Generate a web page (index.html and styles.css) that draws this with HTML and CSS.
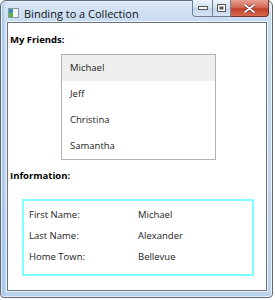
FILE: index.html
```html
<!DOCTYPE html>
<html>
<head>
<meta charset="utf-8">
<link rel="stylesheet" href="styles.css">
</head>
<body>
<div class="window">
  <div class="titlebar">
    <svg class="appicon" width="11" height="10" viewBox="0 0 11 10">
      <rect x="0.5" y="0.5" width="10" height="9" fill="#f4f6f8" stroke="#8c98a4"/>
      <rect x="1" y="1" width="4" height="8" fill="#3a8fb8"/>
      <rect x="1" y="5" width="4" height="4" fill="#5fb04a"/>
    </svg>
    <span class="title">Binding to a Collection</span>
    <div class="buttons">
      <div class="btn min"><svg width="10" height="4" viewBox="0 0 10 4"><rect x="0.5" y="0.5" width="9" height="3" fill="#fff" stroke="#555"/></svg></div>
      <div class="btn max"><svg width="9" height="8" viewBox="0 0 9 8"><rect x="0.5" y="0.5" width="8" height="7" fill="#fff" stroke="#555"/><rect x="2.5" y="2.5" width="4" height="3" fill="#555"/></svg></div>
      <div class="btn close"><svg width="11" height="9" viewBox="0 0 11 9"><path d="M1 1 L10 8 M10 1 L1 8" stroke="#5a2020" stroke-width="3" stroke-linecap="round"/><path d="M1 1 L10 8 M10 1 L1 8" stroke="#fff" stroke-width="1.8" stroke-linecap="round"/></svg></div>
    </div>
  </div>
  <div class="client">
    <div class="heading">My Friends:</div>
    <div class="listbox">
      <div class="item selected">Michael</div>
      <div class="item">Jeff</div>
      <div class="item">Christina</div>
      <div class="item">Samantha</div>
    </div>
    <div class="heading info">Information:</div>
    <div class="details">
      <div class="row"><span class="label">First Name:</span><span>Michael</span></div>
      <div class="row"><span class="label">Last Name:</span><span>Alexander</span></div>
      <div class="row"><span class="label">Home Town:</span><span>Bellevue</span></div>
    </div>
  </div>
</div>
</body>
</html>
```
FILE: styles.css
```css
html, body { margin: 0; padding: 0; background: #fff; }
body { width: 275px; height: 300px; overflow: hidden; font-family: "Open Sans", "Noto Sans", sans-serif; font-size: 9.5px; color: #1a1a1a; }
.window {
  width: 273px; height: 298px; box-sizing: border-box;
  border: 1px solid #5e6a78; border-radius: 6px 6px 4px 4px;
  background: linear-gradient(to bottom, #dbe8f6 0px, #c6dbf1 22px, #b9d2ed 100%);
  display: flex; flex-direction: column;
  box-shadow: inset 0 0 0 1px rgba(255,255,255,0.7), inset 2px 0 0 1px rgba(150,185,225,0.5);
}
.titlebar { height: 21px; display: flex; align-items: flex-start; }
.appicon { margin: 7px 0 0 7px; }
.title { margin: 5px 0 0 5px; font-size: 11px; color: #111; font-family: "Open Sans", sans-serif; }
.buttons { margin-left: auto; margin-right: 3px; display: flex; margin-top: -1px; }
.btn { height: 17px; display: flex; align-items: center; justify-content: center; box-sizing: border-box; border: 1px solid #6f7f92; border-top: none; }
.btn.min { width: 21px; border-radius: 0 0 0 4px; background: linear-gradient(#eef4fb, #d3e1f0 50%, #c2d5eb 51%, #d6e5f5); }
.btn.max { width: 18px; border-left: none; background: linear-gradient(#eef4fb, #d3e1f0 50%, #c2d5eb 51%, #d6e5f5); }
.btn.close { width: 38px; border-left: none; border-color: #7a3328; border-radius: 0 0 4px 0; background: linear-gradient(#e8a190, #d36a55 45%, #c23f2a 55%, #d56b4c); }
.client {
  flex: 1; margin: 0 5px 6px 6px; background: #fff;
  border: 1px solid #6c737c; padding: 0 0 0 2px;
  box-shadow: 0 0 0 1px rgba(255,255,255,0.7);
}
.heading { font-weight: bold; margin-top: 10px; height: 14px; line-height: 14px; color: #000; }
.heading.info { margin-top: 9px; }
.listbox { margin: 7px 0 0 51px; width: 155px; box-sizing: border-box; border: 1px solid #adb2b8; }
.item { height: 26px; line-height: 26px; padding-left: 8px; color: #222; }
.item.selected { background: #efefef; }
.details { margin: 16px 0 0 12px; width: 232px; height: 77px; box-sizing: border-box; border: 2px solid #80ffff; padding: 5px 0 0 5px; }
.row { display: flex; height: 21px; line-height: 17px; }
.label { width: 109px; }
```
